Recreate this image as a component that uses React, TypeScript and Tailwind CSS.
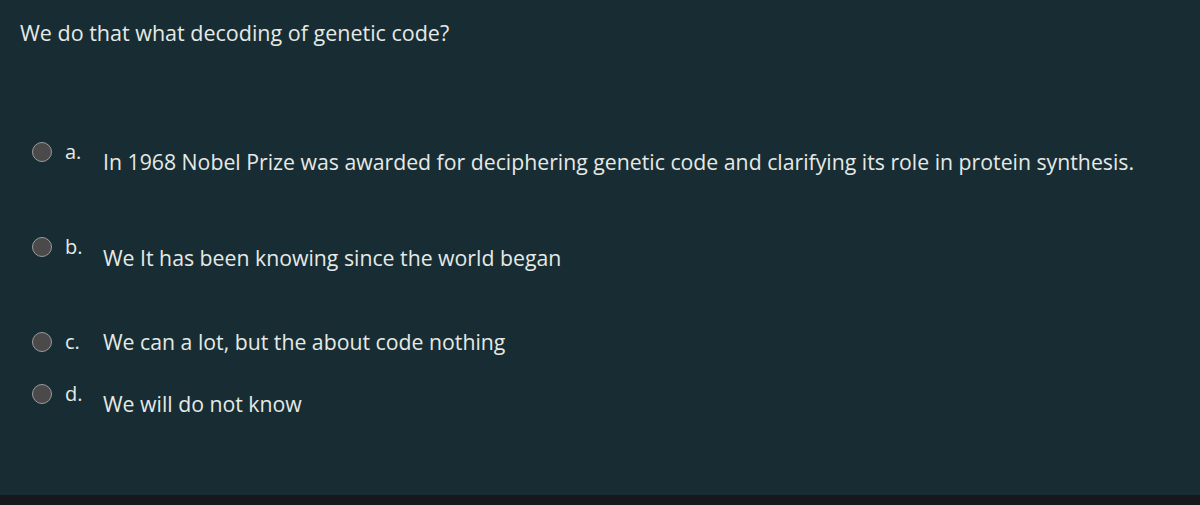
import React from 'react';

interface Option {
  letter: string;
  text: string;
  rowClass: string;
  textClass: string;
}

const options: Option[] = [
  {
    letter: 'a.',
    text: 'In 1968 Nobel Prize was awarded for deciphering genetic code and clarifying its role in protein synthesis.',
    rowClass: 'mt-[94px]',
    textClass: 'mt-[8px]',
  },
  { letter: 'b.', text: 'We It has been knowing since the world began', rowClass: 'mt-[61px]', textClass: 'mt-[9px]' },
  { letter: 'c.', text: 'We can a lot, but the about code nothing', rowClass: 'mt-[60px]', textClass: 'mt-[-2px]' },
  { letter: 'd.', text: 'We will do not know', rowClass: 'mt-[28px]', textClass: 'mt-[8px]' },
];

const Radio: React.FC = () => (
  <span className="mt-[1px] block h-5 w-5 shrink-0 rounded-full border-[1.5px] border-[#9b9b9b] bg-[#4b4949]" />
);

const App: React.FC = () => {
  return (
    <div
      className="flex min-h-screen flex-col bg-[#172d33] text-[#e6e9e6]"
      style={{ fontFamily: '"Open Sans", "Noto Sans", sans-serif' }}
    >
      <div className="flex-1 px-5 pt-[19px]">
        <p className="text-[21.5px] leading-[28px]">We do that what decoding of genetic code?</p>

        <div className="flex flex-col">
          {options.map((o) => (
            <label key={o.letter} className={`flex items-start pl-3 ${o.rowClass}`}>
              <Radio />
              <span className="ml-[13px] w-[38px] shrink-0 text-[20px] leading-[22px]">{o.letter}</span>
              <span className={`text-[21.25px] leading-[26px] ${o.textClass}`}>{o.text}</span>
            </label>
          ))}
        </div>
      </div>
      <div className="h-[10px] bg-[#15191d]" />
    </div>
  );
};

export default App;
